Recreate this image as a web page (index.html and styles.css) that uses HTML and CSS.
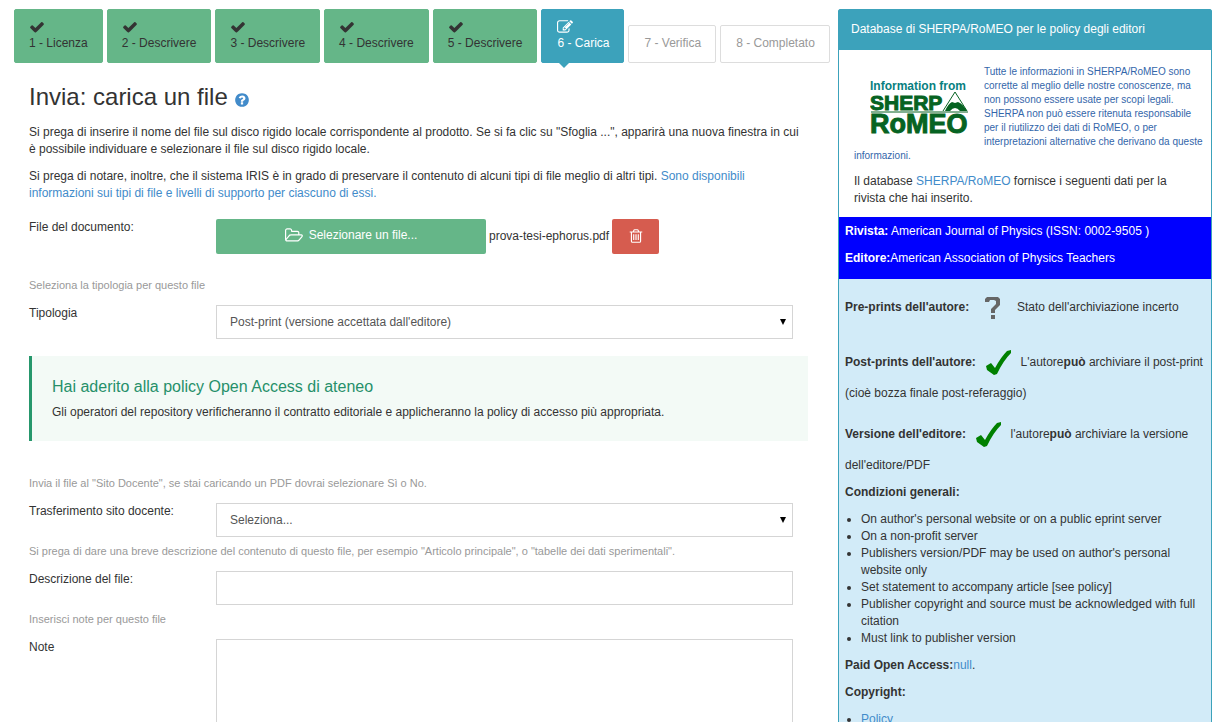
FILE: index.html
```html
<!DOCTYPE html>
<html lang="it">
<head>
<meta charset="utf-8">
<title>Invia: carica un file</title>
<link rel="stylesheet" href="styles.css">
</head>
<body>
<svg class="sprite" aria-hidden="true">
  <symbol id="check" viewBox="0 0 1792 1792"><path d="M1671 566q0 40-28 68l-724 724-136 136q-28 28-68 28t-68-28l-136-136-362-362q-28-28-28-68t28-68l136-136q28-28 68-28t68 28l294 295 656-657q28-28 68-28t68 28l136 136q28 28 28 68z"/></symbol>
  <symbol id="tick" viewBox="0 0 38 45"><path d="M7 26L12 23L16 28Q22 17 28 11L32 10L32 13Q24 21 18 34L15 35L8 30Z"/></symbol>
</svg>
<div class="page">
  <main>
    <nav aria-label="Fasi">
      <ol class="steps">
        <li><button class="step done" type="button"><svg class="icon"><use href="#check"/></svg><span>1 - Licenza</span></button></li>
        <li><button class="step done" type="button"><svg class="icon"><use href="#check"/></svg><span>2 - Descrivere</span></button></li>
        <li><button class="step done" type="button"><svg class="icon"><use href="#check"/></svg><span>3 - Descrivere</span></button></li>
        <li><button class="step done" type="button"><svg class="icon"><use href="#check"/></svg><span>4 - Descrivere</span></button></li>
        <li><button class="step done" type="button"><svg class="icon"><use href="#check"/></svg><span>5 - Descrivere</span></button></li>
        <li><button class="step current" type="button" aria-current="step"><svg class="icon" viewBox="0 0 1792 1792"><path d="M888 1184l116-116-152-152-116 116v56h96v96h56zm440-720q-16-16-33 1l-350 350q-17 17-1 33t33-1l350-350q17-17 1-33zm80 594v190q0 119-84.5 203.5t-203.5 84.5h-832q-119 0-203.5-84.5t-84.5-203.5v-832q0-119 84.5-203.5t203.5-84.5h832q63 0 117 25 15 7 18 23 3 17-9 29l-49 49q-14 14-32 8-23-6-45-6h-832q-66 0-113 47t-47 113v832q0 66 47 113t113 47h832q66 0 113-47t47-113v-126q0-13 9-22l64-64q15-15 35-7t20 29zm-96-738l288 288-672 672h-288v-288zm444 132l-92 92-288-288 92-92q28-28 68-28t68 28l152 152q28 28 28 68t-28 68z"/></svg><span>6 - Carica</span></button></li>
        <li><button class="step todo" type="button" disabled>7 - Verifica</button></li>
        <li><button class="step todo" type="button" disabled>8 - Completato</button></li>
      </ol>
    </nav>
    <form class="upload">
      <h1>Invia: carica un file <a href="#" aria-label="Aiuto"><svg class="help" viewBox="0 0 1792 1792"><path d="M1024 1376v-192q0-14-9-23t-23-9h-192q-14 0-23 9t-9 23v192q0 14 9 23t23 9h192q14 0 23-9t9-23zm256-672q0-88-55.5-163t-138.5-116-170-41q-243 0-371 213-15 24 8 42l132 100q7 6 19 6 16 0 25-12 53-68 86-92 34-24 86-24 48 0 85.5 26t37.5 59q0 38-20 61t-68 45q-63 28-115.5 86.5t-52.5 125.5v36q0 14 9 23t23 9h192q14 0 23-9t9-23q0-19 21.5-49.5t54.5-49.5q32-18 49-28.5t46-35 44.5-48 28-60.5 12.5-81zm384 192q0 209-103 385.5t-279.5 279.5-385.5 103-385.5-103-279.5-279.5-103-385.5 103-385.5 279.5-279.5 385.5-103 385.5 103 279.5 279.5 103 385.5z"/></svg></a></h1>
      <p>Si prega di inserire il nome del file sul disco rigido locale corrispondente al prodotto. Se si fa clic su "Sfoglia ...", apparirà una nuova finestra in cui è possibile individuare e selezionare il file sul disco rigido locale.</p>
      <p>Si prega di notare, inoltre, che il sistema IRIS è in grado di preservare il contenuto di alcuni tipi di file meglio di altri tipi. <a href="#">Sono disponibili informazioni sui tipi di file e livelli di supporto per ciascuno di essi.</a></p>

      <div class="field file-field">
        <span class="label" id="file-label">File del documento:</span>
        <div class="file">
          <button class="btn choose" type="button" aria-describedby="file-label"><svg class="folder" viewBox="0 0 1920 1792"><path d="M1781 931q0-35-53-35h-1088q-40 0-85.500 21.500t-71.500 52.500l-294 363q-18 24-18 40 0 35 53 35h1088q40 0 86-22t71-53l294-363q18-22 18-39zm-1141-163h768v-160q0-40-28-68t-68-28h-576q-40 0-68-28t-28-68v-64q0-40-28-68t-68-28h-320q-40 0-68 28t-28 68v853l256-315q44-53 116-87.500t140-34.500zm1269 163q0 62-46 120l-295 363q-43 53-116 87.500t-140 34.500h-1088q-92 0-158-66t-66-158v-960q0-92 66-158t158-66h320q92 0 158 66t66 158v32h544q92 0 158 66t66 158v160h192q54 0 99 24.500t67 70.500q15 32 15 68z"/></svg>Selezionare un file...</button>
          <span>prova-tesi-ephorus.pdf</span>
          <button class="btn remove" type="button" aria-label="Rimuovi file"><svg class="icon" viewBox="0 0 1792 1792"><path d="M704 736v576q0 14-9 23t-23 9h-64q-14 0-23-9t-9-23v-576q0-14 9-23t23-9h64q14 0 23 9t9 23zm256 0v576q0 14-9 23t-23 9h-64q-14 0-23-9t-9-23v-576q0-14 9-23t23-9h64q14 0 23 9t9 23zm256 0v576q0 14-9 23t-23 9h-64q-14 0-23-9t-9-23v-576q0-14 9-23t23-9h64q14 0 23 9t9 23zm128 724v-948h-896v948q0 22 7 40.500t14.500 27 10.500 8.500h832q3 0 10.500-8.500t14.500-27 7-40.500zm-672-1076h448l-48-117q-7-9-17-11h-317q-10 2-17 11zm928 32v64q0 14-9 23t-23 9h-96v948q0 83-47 143.500t-113 60.500h-832q-66 0-113-58.500t-47-141.500v-952h-96q-14 0-23-9t-9-23v-64q0-14 9-23t23-9h309l70-167q15-37 54-63t79-26h320q40 0 79 26t54 63l70 167h309q14 0 23 9t9 23z"/></svg></button>
        </div>
      </div>

      <p class="hint">Seleziona la tipologia per questo file</p>
      <div class="field">
        <label class="label" for="tipologia">Tipologia</label>
        <div class="select"><select class="control" id="tipologia"><option>Post-print (versione accettata dall'editore)</option></select></div>
      </div>

      <section class="callout">
        <h2>Hai aderito alla policy Open Access di ateneo</h2>
        <p>Gli operatori del repository verificheranno il contratto editoriale e applicheranno la policy di accesso più appropriata.</p>
      </section>

      <p class="hint">Invia il file al "Sito Docente", se stai caricando un PDF dovrai selezionare Sì o No.</p>
      <div class="field">
        <label class="label" for="sito">Trasferimento sito docente:</label>
        <div class="select"><select class="control" id="sito"><option>Seleziona...</option></select></div>
      </div>

      <p class="hint">Si prega di dare una breve descrizione del contenuto di questo file, per esempio "Articolo principale", o "tabelle dei dati sperimentali".</p>
      <div class="field">
        <label class="label" for="descrizione">Descrizione del file:</label>
        <input class="control" id="descrizione" type="text">
      </div>

      <p class="hint">Inserisci note per questo file</p>
      <div class="field">
        <label class="label" for="note">Note</label>
        <textarea class="control notes" id="note"></textarea>
      </div>
    </form>
  </main>

  <aside class="panel">
    <h2 class="panel-title">Database di SHERPA/RoMEO per le policy degli editori</h2>
    <div class="intro">
      <svg class="logo" viewBox="0 0 100 60" role="img" aria-label="Information from SHERPA RoMEO">
        <text class="logo-info" x="0" y="11">Information from</text>
        <text class="logo-name" x="0" y="31">SHERP</text>
        <path class="logo-peak" d="M73 32L85 13L97 32"/>
        <path class="logo-hill" d="M75 32Q78 25 82 23L85 24L88 23Q93 25 97 32H90Q85 26 80 32Z"/>
        <path class="logo-line" d="M1 33H98"/>
        <text class="logo-romeo" x="0" y="54">RoMEO</text>
      </svg>
      <p class="legal">Tutte le informazioni in SHERPA/RoMEO sono corrette al meglio delle nostre conoscenze, ma non possono essere usate per scopi legali. SHERPA non può essere ritenuta responsabile per il riutilizzo dei dati di RoMEO, o per interpretazioni alternative che derivano da queste informazioni.</p>
      <p class="source">Il database <a href="#">SHERPA/RoMEO</a> fornisce i seguenti dati per la rivista che hai inserito.</p>
    </div>
    <div class="journal">
      <p><b>Rivista:</b> American Journal of Physics (ISSN: 0002-9505 )</p>
      <p><b>Editore:</b>American Association of Physics Teachers</p>
    </div>
    <div class="policy">
      <p><b>Pre-prints dell'autore:</b> <svg class="status unknown" viewBox="0 0 41 45" role="img" aria-label="incerto"><path d="M12 16V14L14 12H25L27 14V20L22 25V28H18V24L23 19V16L21 15H17L16 17H12ZM18 30H22V34H18Z"/></svg> Stato dell'archiviazione incerto</p>
      <p><b>Post-prints dell'autore:</b> <svg class="status yes"><use href="#tick"/></svg> L'autore<b>può</b> archiviare il post-print (cioè bozza finale post-referaggio)</p>
      <p><b>Versione dell'editore:</b> <svg class="status yes"><use href="#tick"/></svg> l'autore<b>può</b> archiviare la versione dell'editore/PDF</p>
      <p><b>Condizioni generali:</b></p>
      <ul>
        <li>On author's personal website or on a public eprint server</li>
        <li>On a non-profit server</li>
        <li>Publishers version/PDF may be used on author's personal website only</li>
        <li>Set statement to accompany article [see policy]</li>
        <li>Publisher copyright and source must be acknowledged with full citation</li>
        <li>Must link to publisher version</li>
      </ul>
      <p><b>Paid Open Access:</b><a href="#">null</a>.</p>
      <p><b>Copyright:</b></p>
      <ul>
        <li><a href="#">Policy</a></li>
      </ul>
    </div>
  </aside>
</div>
</body>
</html>
```

FILE: styles.css
```css
* { box-sizing: border-box; }

body {
  margin: 0;
  height: 100vh;
  overflow: hidden;
  background: #fff;
  color: #333;
  font: 12px/17px "Liberation Sans", Arial, sans-serif;
}

p { margin: 0 0 10px; }
a { color: #428bca; text-decoration: none; }
button, input, select, textarea { font: inherit; }
.sprite { display: none; }

.page {
  display: grid;
  grid-template-columns: minmax(0, 1fr) 374px;
  gap: 7px;
  padding: 9px 17px 0 14px;
}

/* Step wizard */
.steps {
  display: flex;
  align-items: flex-end;
  gap: 4px;
  margin: 0;
  padding: 0;
  list-style: none;
}
.step {
  position: relative;
  display: block;
  padding: 9px 14px 11px 15px;
  border: 1px solid #ddd;
  border-radius: 2px;
  background: #fff;
  color: #999;
  line-height: 16px;
  text-align: left;
  white-space: nowrap;
}
.step span { display: block; }
.icon { display: block; width: 16px; height: 16px; fill: currentColor; }
.step.done { padding-left: 14px; background: #65b688; border-color: #65b688; color: #333; }
.step.current { background: #3ca2bb; border-color: #3ca2bb; color: #fff; }
.step.current::after {
  content: "";
  position: absolute;
  top: 100%;
  left: 16px;
  border: 6px solid transparent;
  border-top-color: #3ca2bb;
  border-bottom: 0;
}

/* Upload form */
.upload { padding: 20px 23px 0 15px; }
h1 { margin: 0 0 13px; font-size: 24px; font-weight: 400; line-height: 28px; }
.help { width: 16px; height: 16px; fill: #428bca; vertical-align: -3px; }
.field {
  display: grid;
  grid-template-columns: 187px minmax(0, 1fr);
  padding-right: 15px;
}
.file-field { margin: 17px 0 23px; }
.file { display: flex; align-items: center; gap: 3px; }
.btn {
  display: flex;
  align-items: center;
  justify-content: center;
  height: 35px;
  padding: 0 0 2px;
  border: 0;
  border-radius: 2px;
  color: #fff;
}
.choose { width: 270px; gap: 6px; background: #65b688; }
.remove { width: 47px; background: #d65c4f; }
.folder { width: 18px; height: 17px; fill: currentColor; }
.hint {
  margin: 6px 0 11px;
  color: #999;
  font-size: 11px;
}
.control {
  display: block;
  width: 100%;
  height: 34px;
  padding: 6px 13px;
  border: 1px solid #d5d5d5;
  border-radius: 0;
  background: #fff;
  color: #555;
  appearance: none;
}
.select { position: relative; }
.select::after {
  content: "";
  position: absolute;
  top: 14px;
  right: 7px;
  border: 3px solid transparent;
  border-top: 6px solid #000;
  border-bottom: 0;
  pointer-events: none;
}
.notes { height: 120px; resize: none; }
.callout {
  margin: 17px 0 34px;
  padding: 21px 20px 10px;
  border-left: 3px solid #26976c;
  background: #f3faf6;
}
.callout h2 {
  margin: 0 0 7px;
  color: #26906a;
  font-size: 16px;
  font-weight: 400;
  line-height: 20px;
}

/* Publisher policy panel */
.panel { border: 1px solid #3ca2bb; border-radius: 2px; }
.panel-title {
  margin: 0;
  padding: 11px 12px 12px;
  background: #3ca2bb;
  color: #fff;
  font-size: 12px;
  font-weight: 400;
}
.intro { padding: 15px 8px 15px 15px; }
.source { margin-bottom: -5px; padding-right: 7px; }
.logo { float: left; width: 100px; height: 60px; margin: 14px 14px 10px 16px; }
.logo text { font-family: "Liberation Sans", Arial, sans-serif; font-weight: 700; }
.logo .logo-info { fill: #088080; font-size: 12px; }
.logo-name, .logo-romeo { fill: #066322; stroke: #066322; stroke-width: 1; }
.logo-name { font-size: 21px; }
.logo-romeo { font-size: 27px; }
.logo-peak { fill: none; stroke: #066322; stroke-width: 1; }
.logo-hill { fill: #066322; }
.logo-line { stroke: #066322; stroke-width: 1; }
.legal { color: #36a; font-size: 10px; line-height: 14px; }
.journal { padding: 6px 6px 2px; background: #00f; color: #fff; }
.policy { padding: 6px; background: #d2ebf8; }
.status { width: 38px; height: 45px; vertical-align: middle; }
.unknown { width: 41px; fill: #666; }
.yes { fill: green; }
.policy ul { margin: 0 0 10px; padding-left: 16px; }
```
